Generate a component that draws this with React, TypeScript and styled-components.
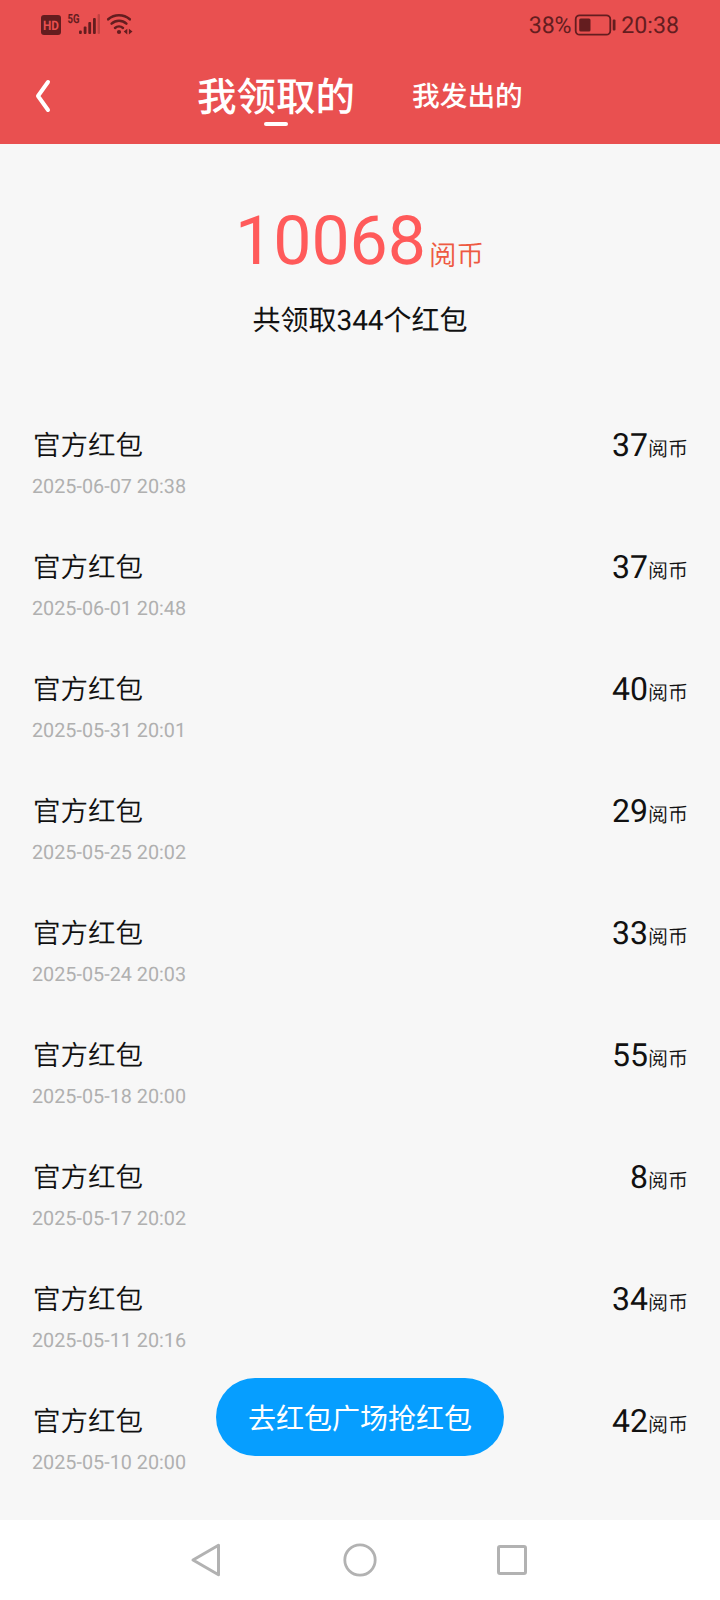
import React from "react";
import styled, { createGlobalStyle } from "styled-components";

const Global = createGlobalStyle`
  body { margin: 0; background: #f7f7f7; }
  * { box-sizing: border-box; }
  svg { display: block; }
`;

const Screen = styled.div`
  position: relative;
  display: flex;
  flex-direction: column;
  width: 720px;
  height: 1600px;
  overflow: hidden;
  background: #f7f7f7;
  color: #111;
  font-family: Roboto, "Noto Sans CJK SC", sans-serif;
  text-rendering: geometricPrecision;
`;

const Header = styled.header`
  flex: none;
  height: 144px;
  background: #e95050;
`;

const StatusBar = styled.div`
  display: flex;
  align-items: center;
  justify-content: space-between;
  height: 48px;
  padding: 1px 41px 0;
  color: #641d1f;
`;

const StatusGroup = styled.div`
  display: flex;
  align-items: center;
  height: 48px;
`;

const StatusText = styled.span`
  font-size: 23.2px;
  line-height: 48px;
`;

const BatteryLevel = styled(StatusText)`
  margin-right: 3px;
  letter-spacing: -0.2px;
`;

const Tabs = styled.nav`
  display: flex;
  height: 96px;
  padding-left: 35px;
`;

const BackIcon = styled.svg`
  margin-top: 31px;
`;

const Tab = styled.div<{ $active?: boolean }>`
  display: flex;
  flex-direction: column;
  align-items: center;
  margin-left: ${(p) => (p.$active ? 146 : 57)}px;
  font-size: ${(p) => (p.$active ? 39.5 : 27.7)}px;
  font-weight: 500;
  line-height: 60px;
  padding-top: ${(p) => (p.$active ? 20 : 19)}px;
  color: #fff;
`;

const Underline = styled.i`
  width: 24px;
  height: 4px;
  margin-top: -6px;
  border-radius: 2px;
  background: #fff;
`;

const Summary = styled.section`
  flex: none;
  display: flex;
  flex-direction: column;
  align-items: center;
  height: 262px;
  padding-top: 57px;
`;

const Total = styled.div`
  display: flex;
  align-items: baseline;
  height: 80px;
  line-height: 80px;
  font-size: 68px;
  color: #ff5a5a;
`;

const TotalUnit = styled.span`
  position: relative;
  top: 1px;
  margin-left: 3px;
  margin-right: 1px;
  font-size: 27.5px;
  font-weight: 350;
  color: #ee5a42;
`;

const Count = styled.div`
  margin-top: 20px;
  font-size: 28px;
  line-height: 40px;
`;

const List = styled.ul`
  flex: 1;
  min-height: 0;
  overflow: hidden;
  margin: 0;
  padding: 0 32px;
  list-style: none;
`;

const Row = styled.li`
  display: flex;
  justify-content: space-between;
  height: 122px;
  padding-top: 20px;
`;

const Title = styled.div`
  padding-left: 1px;
  font-size: 27.5px;
  font-weight: 350;
  line-height: 40px;
`;

const Time = styled.div`
  margin-top: 9px;
  font-size: 19.8px;
  line-height: 24px;
  color: #b0b0b0;
`;

const Amount = styled.div`
  margin-top: -1px;
  font-size: 32px;
  line-height: 40px;
`;

const Unit = styled.span`
  font-size: 20px;
  font-weight: 350;
`;

const GrabButton = styled.button`
  position: absolute;
  left: 216px;
  top: 1378px;
  width: 288px;
  height: 78px;
  padding: 5px 0 0;
  border: 0;
  border-radius: 39px;
  background: #069eff;
  color: #fff;
  font: 400 28px/73px Roboto, "Noto Sans CJK SC", sans-serif;
`;

const NavBar = styled.footer`
  flex: none;
  display: flex;
  justify-content: center;
  gap: 116px;
  height: 80px;
  padding-top: 22px;
  background: #fff;
`;

const records = [
  ["2025-06-07 20:38", 37],
  ["2025-06-01 20:48", 37],
  ["2025-05-31 20:01", 40],
  ["2025-05-25 20:02", 29],
  ["2025-05-24 20:03", 33],
  ["2025-05-18 20:00", 55],
  ["2025-05-17 20:02", 8],
  ["2025-05-11 20:16", 34],
  ["2025-05-10 20:00", 42],
] as const;

const SignalIcons = () => (
  <svg width="96" height="26" viewBox="41 12 96 26" fill="#641d1f">
    <rect x="41" y="15" width="20" height="20" rx="3" />
    <text x="51" y="29.6" fontSize="13" fontWeight="700" textAnchor="middle" textLength="16" lengthAdjust="spacingAndGlyphs" fill="#e95050">HD</text>
    <text x="67.5" y="23" fontSize="12.5" fontWeight="700" textLength="12" lengthAdjust="spacingAndGlyphs">5G</text>
    <rect x="79" y="30.5" width="2.8" height="3.5" rx="1" />
    <rect x="83.7" y="26.5" width="2.8" height="7.5" rx="1" />
    <rect x="88.3" y="22" width="2.8" height="12" rx="1" />
    <rect x="93" y="18" width="2.8" height="16" rx="1" />
    <rect x="97.6" y="14" width="2.4" height="20" rx="1" opacity="0.3" />
    <g fill="none" stroke="#641d1f" strokeWidth="2.5" strokeLinecap="round">
      <path d="M108.2 19.3a16.3 16.3 0 0 1 21.6 0" />
      <path d="M111.6 23.7a11 11 0 0 1 14.8 0" />
      <path d="M115 28a6 6 0 0 1 8 0" />
    </g>
    <circle cx="119" cy="32" r="2.1" />
    <path d="M127.3 28.7v5.8l-3.6-2.9zM128.9 28.7v5.8l3.6-2.9z" />
  </svg>
);

const Battery = () => (
  <svg width="47" height="24" viewBox="573.5 12.5 47 24">
    <rect x="575.2" y="14.8" width="34.6" height="19.4" rx="4" fill="none" stroke="#641d1f" strokeWidth="1.8" />
    <rect x="578.7" y="18" width="11.3" height="13" rx="1.5" fill="#641d1f" />
    <rect x="612.2" y="19" width="2.8" height="11" rx="1" fill="#641d1f" />
  </svg>
);

export default function App() {
  return (
    <Screen>
      <Global />
      <Header>
        <StatusBar>
          <SignalIcons />
          <StatusGroup>
            <BatteryLevel>38%</BatteryLevel>
            <Battery />
            <StatusText>20:38</StatusText>
          </StatusGroup>
        </StatusBar>
        <Tabs>
          <BackIcon width="16" height="34" viewBox="0 0 16 34" fill="none" stroke="#fff" strokeWidth="4" strokeLinecap="round" strokeLinejoin="round">
            <path d="M13 3L3 17l10 14" />
          </BackIcon>
          <Tab $active>
            我领取的
            <Underline />
          </Tab>
          <Tab>我发出的</Tab>
        </Tabs>
      </Header>
      <Summary>
        <Total>
          10068<TotalUnit>阅币</TotalUnit>
        </Total>
        <Count>共领取344个红包</Count>
      </Summary>
      <List>
        {records.map(([time, coins]) => (
          <Row key={time}>
            <div>
              <Title>官方红包</Title>
              <Time>{time}</Time>
            </div>
            <Amount>
              {coins}
              <Unit>阅币</Unit>
            </Amount>
          </Row>
        ))}
      </List>
      <GrabButton>去红包广场抢红包</GrabButton>
      <NavBar>
        <svg width="36" height="36" viewBox="0 0 36 36" fill="none" stroke="#b2b2b2" strokeWidth="3" strokeLinejoin="round">
          <path d="M3 18L28.5 3.2v29.6z" />
        </svg>
        <svg width="36" height="36" viewBox="0 0 36 36" fill="none" stroke="#b2b2b2" strokeWidth="2.8">
          <circle cx="18" cy="18" r="15.2" />
        </svg>
        <svg width="36" height="36" viewBox="0 0 36 36" fill="none" stroke="#b2b2b2" strokeWidth="3">
          <rect x="4.5" y="4.5" width="27" height="27" rx="1.5" />
        </svg>
      </NavBar>
    </Screen>
  );
}
